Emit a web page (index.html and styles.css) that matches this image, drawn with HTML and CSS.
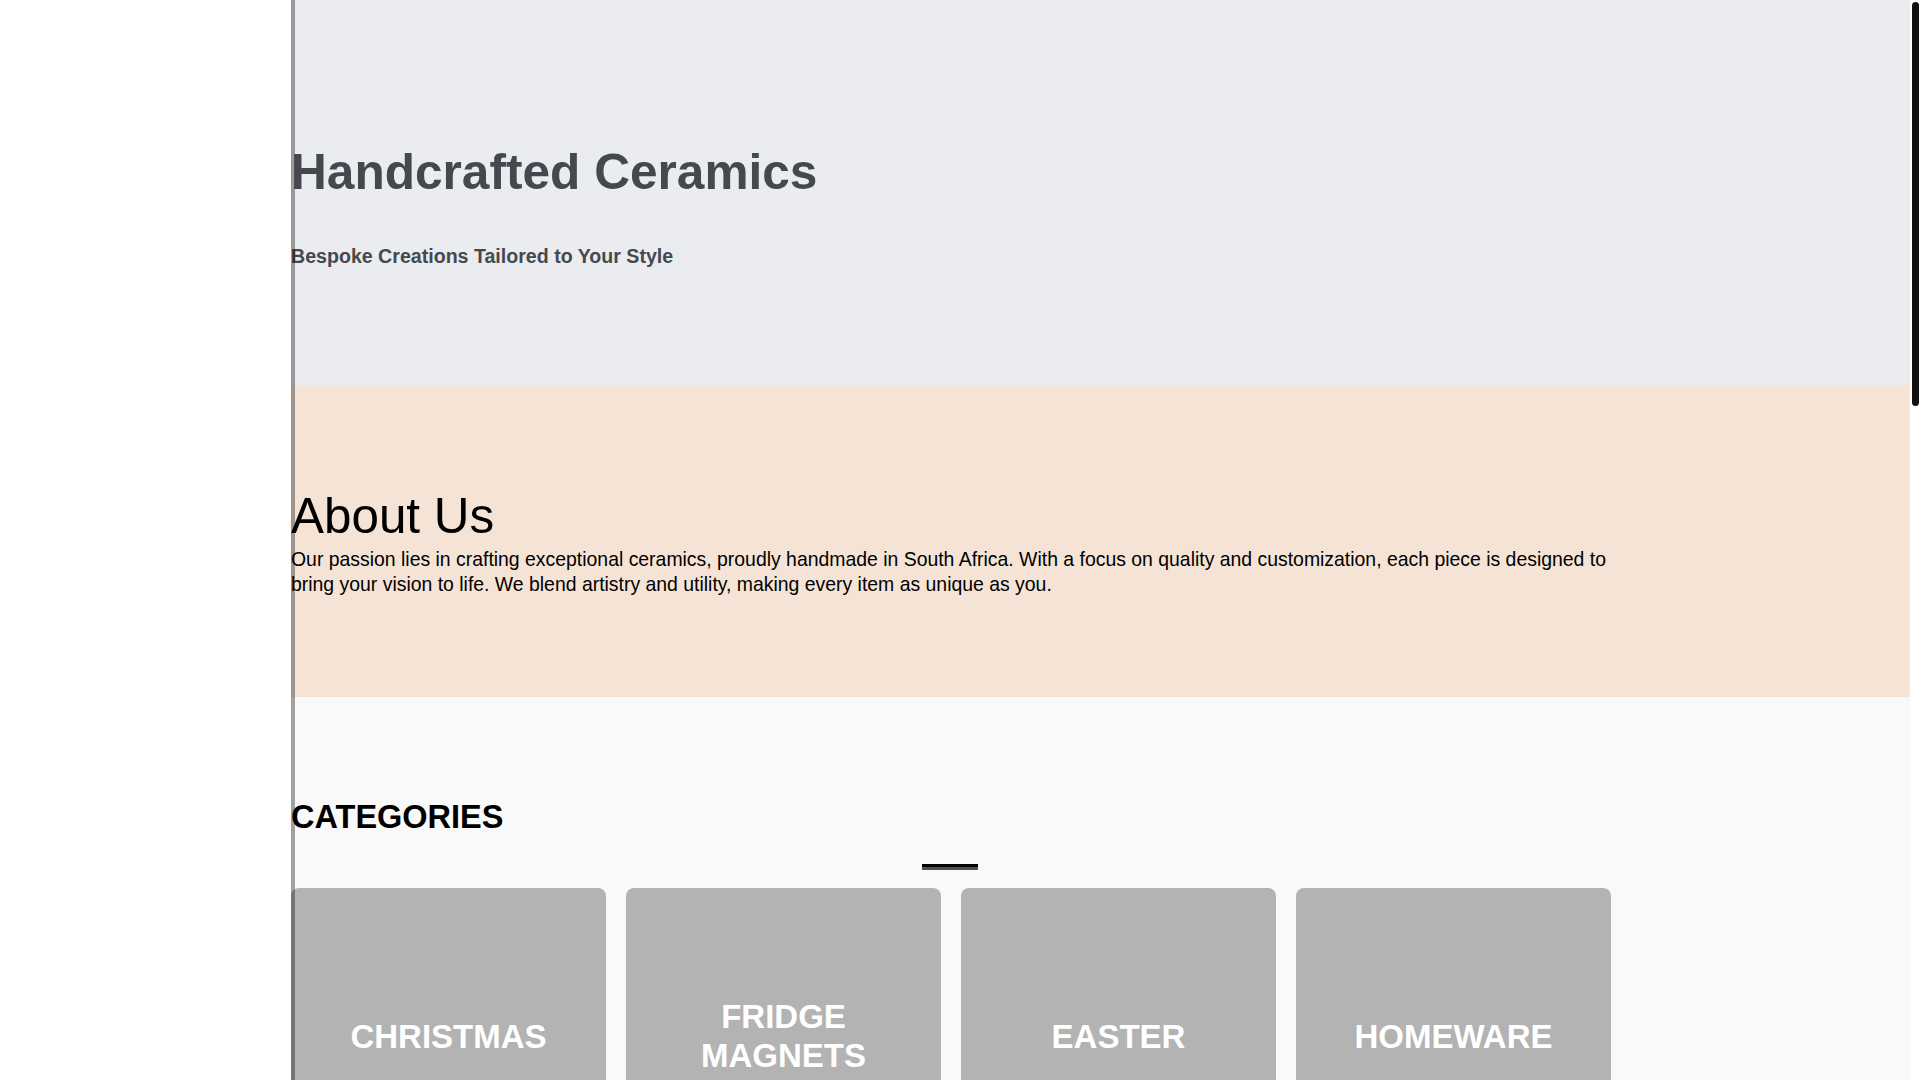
FILE: index.html
```html
<!DOCTYPE html>
<html lang="en">
<head>
<meta charset="utf-8">
<title>Handcrafted Ceramics</title>
<link rel="stylesheet" href="styles.css">
</head>
<body>
<aside class="sidebar"></aside>
<div class="scrollbar"><div class="scrollbar-thumb"></div></div>
<main class="main">
  <section class="hero">
    <div class="container">
      <h1 class="hero-title">Handcrafted Ceramics</h1>
      <h3 class="hero-sub">Bespoke Creations Tailored to Your Style</h3>
    </div>
  </section>

  <section class="about">
    <div class="container">
      <h2 class="about-title">About Us</h2>
      <p class="about-text">Our passion lies in crafting exceptional ceramics, proudly handmade in South Africa. With a focus on quality and customization, each piece is designed to bring your vision to life. We blend artistry and utility, making every item as unique as you.</p>
    </div>
  </section>

  <section class="categories">
    <div class="container">
      <h2 class="section-title">CATEGORIES</h2>
      <div class="title-bar"></div>
      <div class="card-grid">
        <div class="card"><span class="card-label">CHRISTMAS</span></div>
        <div class="card"><span class="card-label">FRIDGE MAGNETS</span></div>
        <div class="card"><span class="card-label">EASTER</span></div>
        <div class="card"><span class="card-label">HOMEWARE</span></div>
      </div>
    </div>
  </section>

  <section class="featured">
    <div class="container">
      <h2 class="section-title">FEATURED</h2>
      <div class="title-bar"></div>
      <div class="card-grid">
        <div class="card"><span class="card-label">MUGS</span></div>
        <div class="card"><span class="card-label">BOWLS</span></div>
        <div class="card"><span class="card-label">VASES</span></div>
        <div class="card"><span class="card-label">PLATES</span></div>
      </div>
    </div>
  </section>

  <section class="contact">
    <div class="container">
      <h2 class="about-title">Contact Us</h2>
      <p class="about-text">Get in touch to discuss a custom order or to find out more about our handcrafted range.</p>
    </div>
  </section>

  <footer class="footer">
    <div class="container">
      <p class="footer-text">&copy; Handcrafted Ceramics. Proudly handmade in South Africa.</p>
    </div>
  </footer>
</main>
</body>
</html>
```
FILE: styles.css
```css
html {
  overflow-y: scroll;
}
::-webkit-scrollbar {
  width: 0;
}

body {
  margin: 0;
  background: #ffffff;
  font-family: "Liberation Sans", Arial, Helvetica, sans-serif;
  color: #000;
}

.sidebar {
  position: fixed;
  top: 0;
  left: 0;
  width: 291px;
  height: 100vh;
  border-right: 4px solid rgba(0, 0, 0, 0.35);
  z-index: 10;
  pointer-events: none;
}

/* scrollbar drawn as an overlay on the right edge */
.scrollbar {
  position: fixed;
  top: 0;
  right: 0;
  width: 10px;
  height: 100vh;
  background: #ffffff;
  z-index: 20;
}
.scrollbar-thumb {
  margin: 2px 1px 0 2px;
  height: 404px;
  border-radius: 4px;
  background: #111111;
}

.main {
  margin-left: 291px;
  margin-right: 10px;
}

.container {
  width: 1320px;
}

/* Hero */
.hero {
  height: 385px;
  box-sizing: border-box;
  padding-top: 142.8px;
  background: #ebecf0;
}
.hero-title {
  margin: 0;
  font-size: 49.6px;
  line-height: 59.4px;
  font-weight: 700;
  color: #45494f;
}
.hero-sub {
  margin: 42.6px 0 0;
  font-size: 19.6px;
  line-height: 23.3px;
  font-weight: 700;
  color: #45494f;
}

/* About */
.about {
  height: 312px;
  box-sizing: border-box;
  padding-top: 100.5px;
  background: #f5e4d6;
}
.about-title {
  margin: 0;
  font-size: 49.4px;
  line-height: 59.4px;
  font-weight: 400;
}
.about-text {
  margin: 2px 0 0;
  font-size: 19.42px;
  line-height: 25.2px;
}

/* Categories */
.categories,
.featured {
  box-sizing: border-box;
  padding: 101px 0 100px;
  background: #f9f9f9;
}
.featured {
  padding-top: 60px;
  padding-bottom: 80px;
}
.section-title {
  margin: 0;
  font-size: 32.5px;
  line-height: 38.4px;
  font-weight: 700;
}
.title-bar {
  width: 56px;
  height: 3px;
  margin: 27.6px 0 18px 631px;
  background: #000;
  border-bottom: 3px solid #505050;
}
.card-grid {
  display: grid;
  grid-template-columns: repeat(4, 1fr);
  gap: 20px;
}
.card {
  height: 298px;
  box-sizing: border-box;
  padding: 0 20px;
  border-radius: 8px;
  background: #b3b3b3;
  display: flex;
  align-items: center;
  justify-content: center;
}
.card-label {
  color: #ffffff;
  font-size: 33px;
  line-height: 38.8px;
  font-weight: 700;
  text-align: center;
}

/* Contact */
.contact {
  height: 440px;
  box-sizing: border-box;
  padding-top: 100px;
  background: #f5e4d6;
}

/* Footer */
.footer {
  height: 220px;
  box-sizing: border-box;
  padding-top: 90px;
  background: #45494f;
}
.footer-text {
  margin: 0;
  color: #ebecf0;
  font-size: 16px;
}
```
